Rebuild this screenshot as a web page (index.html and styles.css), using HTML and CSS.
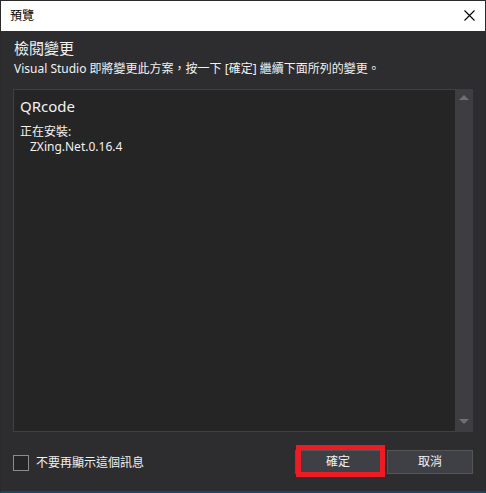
FILE: index.html
```html
<!DOCTYPE html>
<html lang="zh-Hant">
<head>
<meta charset="utf-8">
<title>預覽</title>
<link rel="stylesheet" href="styles.css">
</head>
<body>
<div class="window">
  <div class="titlebar">
    <span class="title">預覽</span>
    <svg class="close" width="11" height="11" viewBox="0 0 11 11"><path d="M0.5 0.5 L10.5 10.5 M10.5 0.5 L0.5 10.5" stroke="#000" stroke-width="1.1" fill="none"/></svg>
  </div>
  <div class="content">
    <h1 class="heading">檢閱變更</h1>
    <p class="desc">Visual Studio 即將變更此方案，按一下 [確定] 繼續下面所列的變更。</p>
    <div class="panel">
      <div class="panel-body">
        <div class="project">QRcode</div>
        <div class="action">正在安裝:</div>
        <div class="pkg">ZXing.Net.0.16.4</div>
      </div>
      <div class="scrollbar">
        <span class="arrow up"></span>
        <span class="arrow down"></span>
      </div>
    </div>
  </div>
  <div class="footer">
    <label class="check"><span class="box"></span><span class="check-label">不要再顯示這個訊息</span></label>
    <div class="buttons">
      <button class="btn ok">確定<span class="highlight"></span></button>
      <button class="btn">取消</button>
    </div>
  </div>
</div>
</body>
</html>
```
FILE: styles.css
```css
html, body {
  margin: 0;
  padding: 0;
}
body {
  width: 486px;
  height: 493px;
  background: #2d2d30;
  font-family: "Noto Sans", "Noto Sans CJK TC", sans-serif;
  overflow: hidden;
}
.window {
  box-sizing: border-box;
  width: 486px;
  height: 493px;
  border-top: 1px solid #2b2b2b;
  border-left: 1px solid #2b2b2b;
  border-right: 1px solid #2b2b2b;
  border-bottom: 2px solid #12496b;
  background: #2d2d30;
  display: flex;
  flex-direction: column;
}
.titlebar {
  height: 30px;
  background: #ffffff;
  display: flex;
  align-items: center;
  justify-content: space-between;
  padding: 0 10px 0 9px;
  flex: none;
}
.title {
  font-size: 12px;
  color: #000;
  line-height: 16px;
}
.close {
  display: block;
  margin-top: -1px;
}
.content {
  padding: 6px 12px 0 12px;
  color: #f1f1f1;
}
.heading {
  margin: 0;
  font-size: 15px;
  font-weight: normal;
  line-height: 22px;
  padding-left: 1px;
}
.desc {
  margin: 2px 0 0 0;
  font-size: 12px;
  line-height: 16px;
  padding-left: 1px;
}
.panel {
  margin-top: 12px;
  height: 343px;
  box-sizing: border-box;
  border: 1px solid #3f3f46;
  border-right: none;
  background: #252526;
  display: flex;
}
.panel-body {
  flex: 1;
  padding: 6px 0 0 6px;
}
.project {
  font-size: 15px;
  line-height: 20px;
}
.action {
  margin-top: 8px;
  font-size: 12px;
  line-height: 15px;
}
.pkg {
  font-size: 12px;
  line-height: 15px;
  padding-left: 10px;
}
.scrollbar {
  width: 18px;
  margin-top: -1px;
  margin-bottom: -1px;
  background: #3e3e42;
  display: flex;
  flex-direction: column;
  justify-content: space-between;
  align-items: center;
  padding: 6px 0 8px 0;
}
.arrow {
  width: 0;
  height: 0;
  border-left: 5px solid transparent;
  border-right: 5px solid transparent;
}
.arrow.up {
  border-bottom: 5px solid #6f6f74;
}
.arrow.down {
  border-top: 5px solid #6f6f74;
}
.footer {
  flex: 1;
  display: flex;
  align-items: center;
  justify-content: space-between;
  padding: 0 12px;
  color: #f1f1f1;
}
.check {
  display: flex;
  align-items: center;
  gap: 7px;
  margin-top: 3px;
}
.box {
  width: 14px;
  height: 14px;
  border: 1px solid #8c8c8c;
  background: #252526;
}
.check-label {
  font-size: 12px;
  line-height: 16px;
}
.buttons {
  display: flex;
  gap: 6px;
  margin-top: 1px;
}
.btn {
  position: relative;
  width: 86px;
  height: 24px;
  box-sizing: border-box;
  background: #3f3f46;
  border: 1px solid #555555;
  color: #f1f1f1;
  font-family: "Noto Sans", "Noto Sans CJK TC", sans-serif;
  font-size: 12px;
  padding: 0;
  line-height: 20px;
}
.highlight {
  position: absolute;
  left: 0px;
  top: -6px;
  width: 89px;
  height: 32px;
  box-sizing: border-box;
  border: 5px solid #ed1c24;
}
```
